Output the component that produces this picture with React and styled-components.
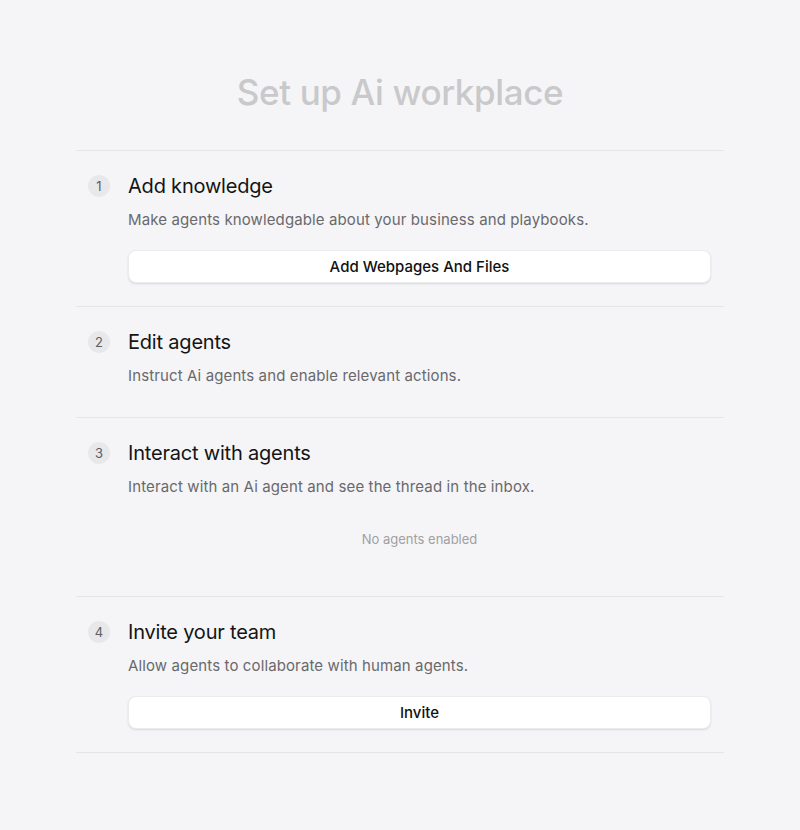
import styled, { createGlobalStyle } from "styled-components";

const GlobalStyle = createGlobalStyle`
  body {
    margin: 0;
    background: #f5f5f7;
    font-family: Inter, "Noto Sans", "Liberation Sans", sans-serif;
    -webkit-font-smoothing: antialiased;
  }
`;

const Page = styled.div`
  min-height: 830px;
  padding: 66px 76px 0;
  box-sizing: border-box;
`;

const Title = styled.h1`
  margin: 0 0 32px;
  text-align: center;
  font-size: 35px;
  line-height: 52px;
  font-weight: 500;
  letter-spacing: -0.4px;
  color: #c9c9cb;
`;

const Steps = styled.div`
  border-top: 1px solid #e5e5e8;
`;

const Step = styled.section`
  display: grid;
  grid-template-columns: 22px 1fr;
  column-gap: 18px;
  padding: 23px 13px 23px 12px;
  border-bottom: 1px solid #e5e5e8;
`;

const Number = styled.div`
  width: 22px;
  height: 22px;
  margin-top: 1px;
  border-radius: 50%;
  background: #e8e8ea;
  color: #5e5e61;
  font-size: 13px;
  display: flex;
  align-items: center;
  justify-content: center;
`;

const Body = styled.div`
  display: flex;
  flex-direction: column;
`;

const StepTitle = styled.h2`
  margin: 0;
  font-size: 20px;
  line-height: 24px;
  font-weight: 400;
  letter-spacing: -0.2px;
  color: #141414;
`;

const Description = styled.p`
  margin: 12px 0 8px;
  font-size: 15px;
  line-height: 20px;
  letter-spacing: 0.12px;
  color: #69696c;
`;

const Button = styled.button`
  margin-top: 12px;
  height: 33px;
  border: 1px solid #ececee;
  border-radius: 8px;
  background: #fff;
  box-shadow: 0 1px 2px rgba(0, 0, 0, 0.12);
  font-family: inherit;
  font-size: 15px;
  font-weight: 500;
  color: #111;
  cursor: pointer;
`;

const Empty = styled.div`
  height: 68px;
  display: flex;
  align-items: center;
  justify-content: center;
  font-size: 13px;
  color: #a0a0a3;
`;

const steps = [
  {
    title: "Add knowledge",
    text: "Make agents knowledgable about your business and playbooks.",
    action: "Add Webpages And Files",
  },
  {
    title: "Edit agents",
    text: "Instruct Ai agents and enable relevant actions.",
  },
  {
    title: "Interact with agents",
    text: "Interact with an Ai agent and see the thread in the inbox.",
    empty: "No agents enabled",
  },
  {
    title: "Invite your team",
    text: "Allow agents to collaborate with human agents.",
    action: "Invite",
  },
];

const App = () => (
  <>
    <GlobalStyle />
    <Page>
      <Title>Set up Ai workplace</Title>
      <Steps>
        {steps.map((s, i) => (
          <Step key={s.title}>
            <Number>{i + 1}</Number>
            <Body>
              <StepTitle>{s.title}</StepTitle>
              <Description>{s.text}</Description>
              {s.action && <Button>{s.action}</Button>}
              {s.empty && <Empty>{s.empty}</Empty>}
            </Body>
          </Step>
        ))}
      </Steps>
    </Page>
  </>
);

export default App;
